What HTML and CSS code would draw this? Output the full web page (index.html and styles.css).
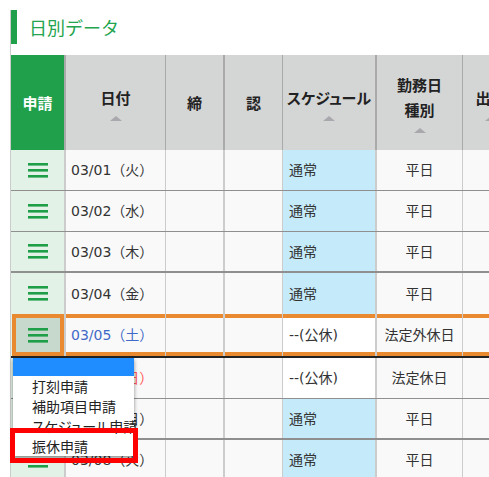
FILE: index.html
```html
<!DOCTYPE html>
<html lang="ja">
<head>
  <meta charset="UTF-8" />
  <meta name="viewport" content="width=device-width, initial-scale=1.0" />
  <title>日別データ</title>
  <link rel="stylesheet" href="styles.css">
</head>
<body>
  <div class="page">
    <h2 class="section-title">日別データ</h2>

    <div class="daily-table">
      <div class="row head">
        <div class="cell apply-head">申請</div>
        <div class="cell sortable"><span>日付</span><i class="sort-arrow"></i></div>
        <div class="cell thick"><span>締</span></div>
        <div class="cell"><span>認</span></div>
        <div class="cell sortable thick"><span class="kana">スケジュール</span><i class="sort-arrow"></i></div>
        <div class="cell sortable"><span>勤務日<br>種別</span><i class="sort-arrow"></i></div>
        <div class="cell sortable"><span>出勤</span><i class="sort-arrow"></i></div>
      </div>

      <div class="row">
        <div class="cell apply"><svg class="burger" viewBox="0 0 20 15"><rect y="0" width="20" height="2.6"/><rect y="6" width="20" height="2.6"/><rect y="12" width="20" height="2.6"/></svg></div>
        <div class="cell date">03/01（火）</div>
        <div class="cell thick"></div>
        <div class="cell"></div>
        <div class="cell sched thick">通常</div>
        <div class="cell kind">平日</div>
        <div class="cell"></div>
      </div>
      <div class="row">
        <div class="cell apply"><svg class="burger" viewBox="0 0 20 15"><rect y="0" width="20" height="2.6"/><rect y="6" width="20" height="2.6"/><rect y="12" width="20" height="2.6"/></svg></div>
        <div class="cell date">03/02（水）</div>
        <div class="cell thick"></div>
        <div class="cell"></div>
        <div class="cell sched thick">通常</div>
        <div class="cell kind">平日</div>
        <div class="cell"></div>
      </div>
      <div class="row week-end">
        <div class="cell apply"><svg class="burger" viewBox="0 0 20 15"><rect y="0" width="20" height="2.6"/><rect y="6" width="20" height="2.6"/><rect y="12" width="20" height="2.6"/></svg></div>
        <div class="cell date">03/03（木）</div>
        <div class="cell thick"></div>
        <div class="cell"></div>
        <div class="cell sched thick">通常</div>
        <div class="cell kind">平日</div>
        <div class="cell"></div>
      </div>
      <div class="row no-line">
        <div class="cell apply"><svg class="burger" viewBox="0 0 20 15"><rect y="0" width="20" height="2.6"/><rect y="6" width="20" height="2.6"/><rect y="12" width="20" height="2.6"/></svg></div>
        <div class="cell date">03/04（金）</div>
        <div class="cell thick"></div>
        <div class="cell"></div>
        <div class="cell sched thick">通常</div>
        <div class="cell kind">平日</div>
        <div class="cell"></div>
      </div>

      <div class="row is-selected">
        <div class="cell apply"><svg class="burger" viewBox="0 0 20 15"><rect y="0" width="20" height="2.6"/><rect y="6" width="20" height="2.6"/><rect y="12" width="20" height="2.6"/></svg></div>
        <div class="cell date sat">03/05（土）</div>
        <div class="cell thick"></div>
        <div class="cell"></div>
        <div class="cell sched off thick">--(公休)</div>
        <div class="cell kind">法定外休日</div>
        <div class="cell"></div>

        <ul class="apply-menu">
          <li class="menu-bar"></li>
          <li>打刻申請</li>
          <li>補助項目申請</li>
          <li class="kana">スケジュール申請</li>
          <li class="marked">振休申請</li>
        </ul>
      </div>

      <div class="row">
        <div class="cell apply"><svg class="burger" viewBox="0 0 20 15"><rect y="0" width="20" height="2.6"/><rect y="6" width="20" height="2.6"/><rect y="12" width="20" height="2.6"/></svg></div>
        <div class="cell date sun">03/06（日）</div>
        <div class="cell thick"></div>
        <div class="cell"></div>
        <div class="cell sched off thick">--(公休)</div>
        <div class="cell kind">法定休日</div>
        <div class="cell"></div>
      </div>
      <div class="row week-end">
        <div class="cell apply"><svg class="burger" viewBox="0 0 20 15"><rect y="0" width="20" height="2.6"/><rect y="6" width="20" height="2.6"/><rect y="12" width="20" height="2.6"/></svg></div>
        <div class="cell date">03/07（月）</div>
        <div class="cell thick"></div>
        <div class="cell"></div>
        <div class="cell sched thick">通常</div>
        <div class="cell kind">平日</div>
        <div class="cell"></div>
      </div>
      <div class="row">
        <div class="cell apply"><svg class="burger" viewBox="0 0 20 15"><rect y="0" width="20" height="2.6"/><rect y="6" width="20" height="2.6"/><rect y="12" width="20" height="2.6"/></svg></div>
        <div class="cell date">03/08（火）</div>
        <div class="cell thick"></div>
        <div class="cell"></div>
        <div class="cell sched thick">通常</div>
        <div class="cell kind">平日</div>
        <div class="cell"></div>
      </div>
    </div>
  </div>
</body>
</html>
```

FILE: styles.css
```css
body {
  margin: 0;
  font-family: "DejaVu Sans", "Noto Sans CJK JP", sans-serif;
  background-color: #ffffff;
  overflow: hidden;
  color: #333;
}

.page {
  margin-left: 10px;
  min-height: 100vh;
  border-left: 1px solid #cccccc;
}

.section-title {
  margin: 10px 0 0 0;
  height: 34px;
  line-height: 34px;
  padding-left: 12px;
  border-left: 6px solid #20a04b;
  font-family: "Noto Sans CJK JP", sans-serif;
  font-size: 18px;
  font-weight: normal;
  color: #22a54e;
}

/* カタカナを詰める */
.kana {
  font-feature-settings: "palt";
}

.daily-table {
  margin-top: 11px;
  width: 560px;
}

.row {
  display: grid;
  grid-template-columns: 55px 100px 59px 58px 94px 86px 56px;
  height: 41px;
  box-sizing: border-box;
  border-bottom: 1px solid #8f8f8f;
  position: relative;
}

.row.week-end {
  border-bottom-width: 2px;
}

.row.no-line {
  border-bottom: none;
}

.cell {
  box-sizing: border-box;
  border-right: 1px solid #cccccc;
  background-color: #f9f9f9;
  font-size: 14px;
  line-height: 20px;
  display: flex;
  align-items: center;
  white-space: nowrap;
}

.cell.thick {
  border-right-width: 2px;
}

/* ヘッダー */
.row.head {
  height: 95px;
  border-bottom: none;
}

.head .cell {
  background-color: #d4d5d5;
  border-right-color: #aaaaaa;
  flex-direction: column;
  justify-content: center;
  font-family: "Noto Sans CJK JP", sans-serif;
  font-size: 15px;
  font-weight: bold;
  line-height: 25px;
  text-align: center;
  color: #222;
}

.head .apply-head {
  background-color: #20a04b;
  color: #ffffff;
  border-right: 2px solid #aaaaaa;
}

.sort-arrow {
  display: block;
  margin-top: 6px;
  width: 0;
  height: 0;
  border-left: 6px solid transparent;
  border-right: 6px solid transparent;
  border-bottom: 5px solid #a9a9ad;
}

/* 明細 */
.cell.apply {
  background-color: #e2f2e7;
  border-right-width: 2px;
  justify-content: center;
}

.burger {
  width: 20px;
  height: 15px;
  fill: #1f9e48;
}

.cell.date {
  padding-left: 5px;
}

.cell.date.sat {
  color: #4169c8;
}

.cell.date.sun {
  color: #ff5a5a;
}

.cell.sched {
  padding-left: 6px;
  background-color: #c5ebfb;
}

.cell.sched.off {
  background-color: #ffffff;
}

.cell.kind {
  justify-content: center;
}

/* 選択中の行 */
.row.is-selected {
  height: 44px;
  border-bottom: 2px solid #222222;
}

.is-selected .cell {
  box-shadow: inset 0 4px 0 #e98a30, inset 0 -4px 0 #e98a30;
}

.is-selected .cell.apply {
  background-color: #c6d9cc;
  box-shadow: inset 0 0 0 4px #e98a30;
  border-left: 1px solid #e2f2e7;
}

/* 申請メニュー */
.apply-menu {
  position: absolute;
  top: calc(100% + 2px);
  left: 2px;
  width: 121px;
  margin: 0;
  padding: 0;
  list-style: none;
  background-color: #ffffff;
  box-shadow: 0 2px 4px rgba(0, 0, 0, 0.45);
  z-index: 2;
  font-family: "Noto Sans CJK JP", sans-serif;
  color: #222;
}

.apply-menu li {
  padding-left: 19px;
  font-size: 14px;
  line-height: 20px;
  white-space: nowrap;
  position: relative;
}

.apply-menu .menu-bar {
  height: 18px;
  padding: 0;
  background-color: #1f8cff;
}

.apply-menu .marked::after {
  content: "";
  position: absolute;
  top: -8px;
  bottom: -7px;
  left: -3px;
  right: -4px;
  border: 5px solid #ff0000;
}
```
